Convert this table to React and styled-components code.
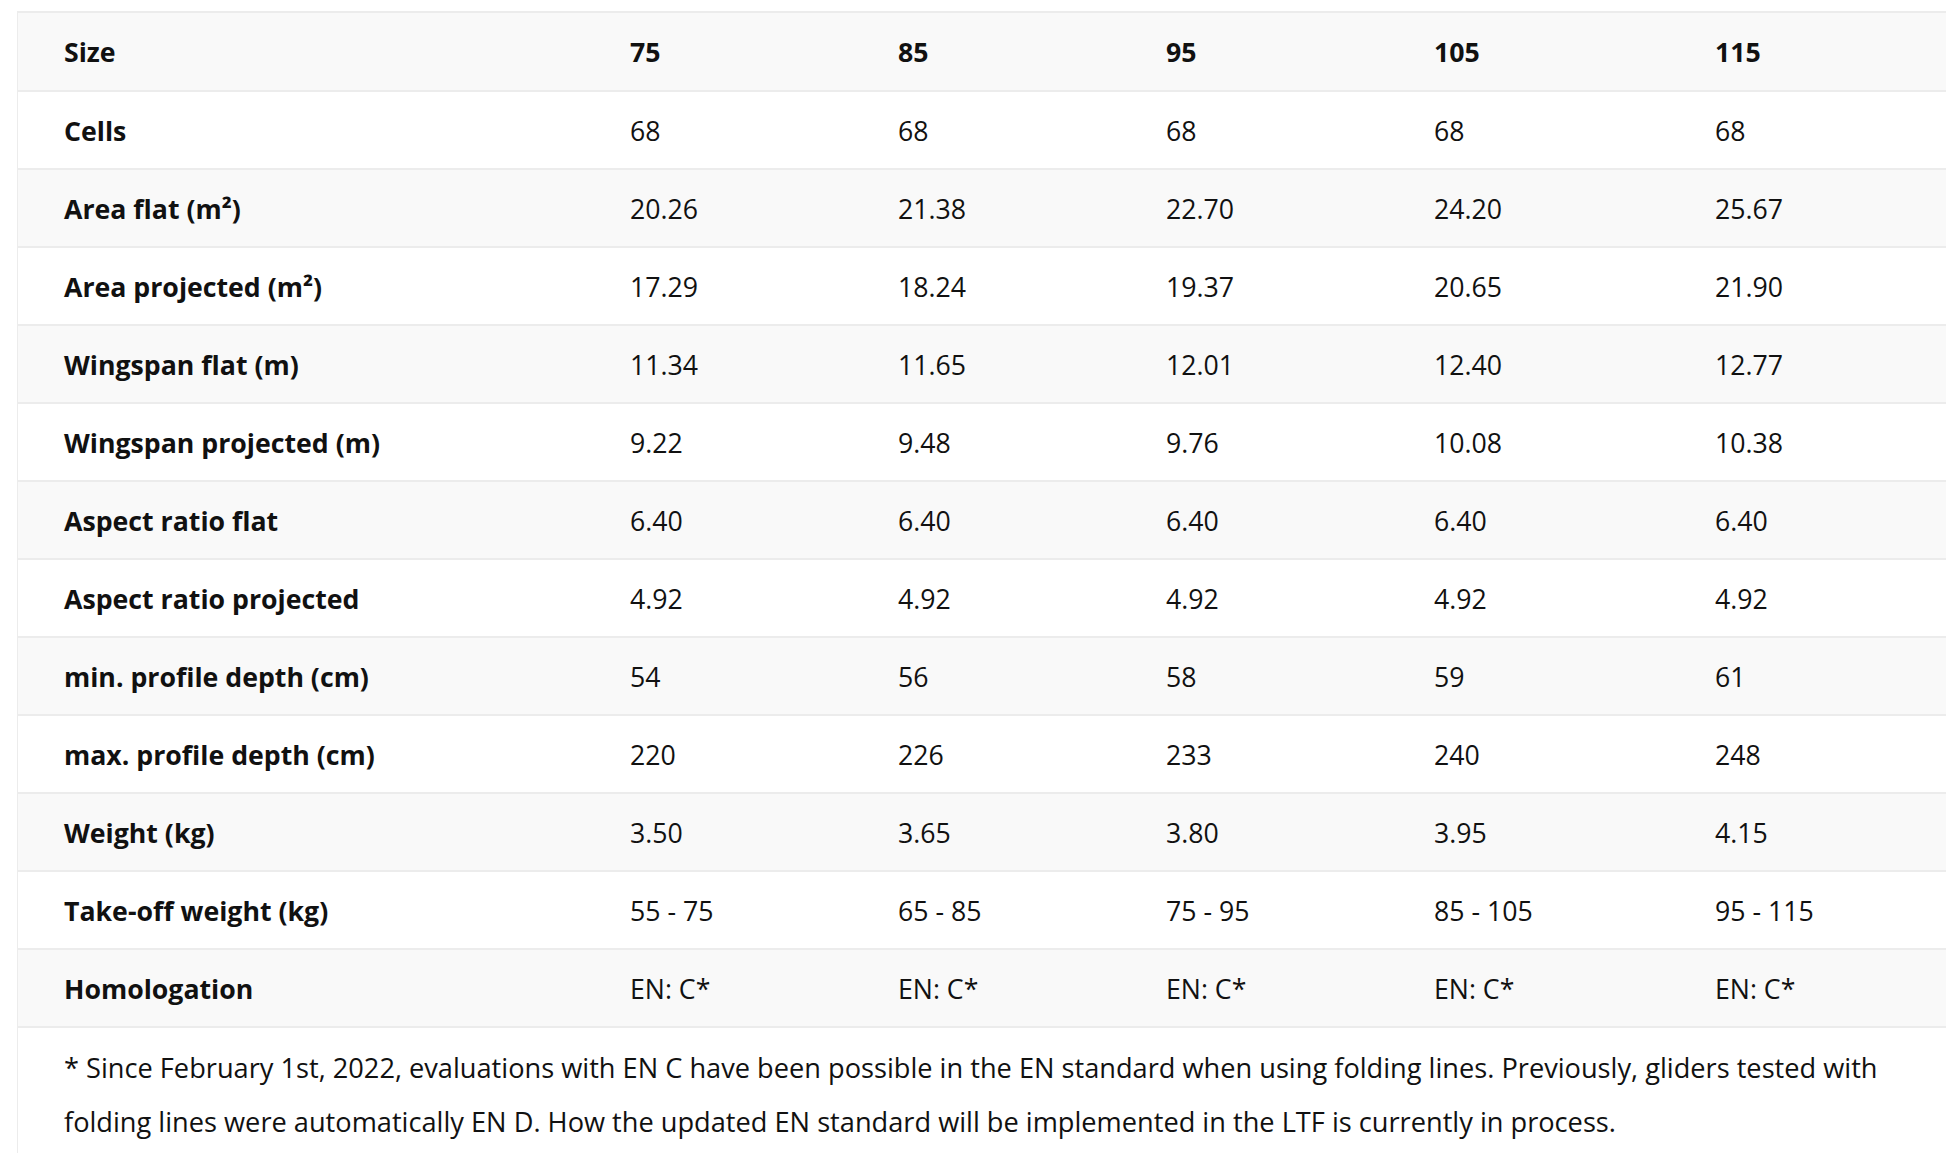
import React from 'react';
import styled, { createGlobalStyle } from 'styled-components';

const GlobalStyle = createGlobalStyle`
  body {
    margin: 0;
    background: #fff;
    overflow: hidden;
    font-family: "Open Sans", "Noto Sans", sans-serif;
    color: #111;
  }
`;

const Page = styled.div`
  padding: 11px 0 0 17px;
  width: 2100px;
`;

const Box = styled.div`
  border-left: 1px solid #ececec;
  border-top: 2px solid #ececec;
`;

const Table = styled.table`
  border-collapse: collapse;
  table-layout: fixed;
  width: 2083px;
  font-size: 26.7px;
`;

const Row = styled.tr`
  height: 78px;
  background: ${(p) => (p.$shaded ? '#f9f9f9' : '#fff')};
  border-bottom: 2px solid #ececec;
`;

const Label = styled.td`
  padding: 0 0 0 46px;
  font-weight: 700;
  white-space: nowrap;
`;

const Cell = styled.td`
  padding: 0 0 0 46px;
  font-weight: ${(p) => (p.$head ? 700 : 400)};
  white-space: nowrap;
`;

const Note = styled.p`
  margin: 0;
  padding: 13px 0 20px 46px;
  max-width: 1840px;
  font-size: 27.2px;
  line-height: 54px;
`;

const sizes = ['75', '85', '95', '105', '115'];

const rows = [
  ['Cells', ['68', '68', '68', '68', '68']],
  ['Area flat (m²)', ['20.26', '21.38', '22.70', '24.20', '25.67']],
  ['Area projected (m²)', ['17.29', '18.24', '19.37', '20.65', '21.90']],
  ['Wingspan flat (m)', ['11.34', '11.65', '12.01', '12.40', '12.77']],
  ['Wingspan projected (m)', ['9.22', '9.48', '9.76', '10.08', '10.38']],
  ['Aspect ratio flat', ['6.40', '6.40', '6.40', '6.40', '6.40']],
  ['Aspect ratio projected', ['4.92', '4.92', '4.92', '4.92', '4.92']],
  ['min. profile depth (cm)', ['54', '56', '58', '59', '61']],
  ['max. profile depth (cm)', ['220', '226', '233', '240', '248']],
  ['Weight (kg)', ['3.50', '3.65', '3.80', '3.95', '4.15']],
  ['Take-off weight (kg)', ['55 - 75', '65 - 85', '75 - 95', '85 - 105', '95 - 115']],
  ['Homologation', ['EN: C*', 'EN: C*', 'EN: C*', 'EN: C*', 'EN: C*']],
];

const App = () => {
  return (
    <Page>
      <GlobalStyle />
      <Box>
        <Table>
          <colgroup>
            <col style={{ width: 566 }} />
            <col style={{ width: 268 }} />
            <col style={{ width: 268 }} />
            <col style={{ width: 268 }} />
            <col style={{ width: 281 }} />
            <col />
          </colgroup>
          <tbody>
            <Row $shaded>
              <Label>Size</Label>
              {sizes.map((s) => (
                <Cell key={s} $head>{s}</Cell>
              ))}
            </Row>
            {rows.map(([label, values], i) => (
              <Row key={label} $shaded={i % 2 === 1}>
                <Label>{label}</Label>
                {values.map((v, j) => (
                  <Cell key={j}>{v}</Cell>
                ))}
              </Row>
            ))}
          </tbody>
        </Table>
        <Note>
          * Since February 1st, 2022, evaluations with EN C have been possible in the EN standard
          when using folding lines. Previously, gliders tested with folding lines were automatically
          EN D. How the updated EN standard will be implemented in the LTF is currently in process.
        </Note>
      </Box>
    </Page>
  );
};

export default App;
